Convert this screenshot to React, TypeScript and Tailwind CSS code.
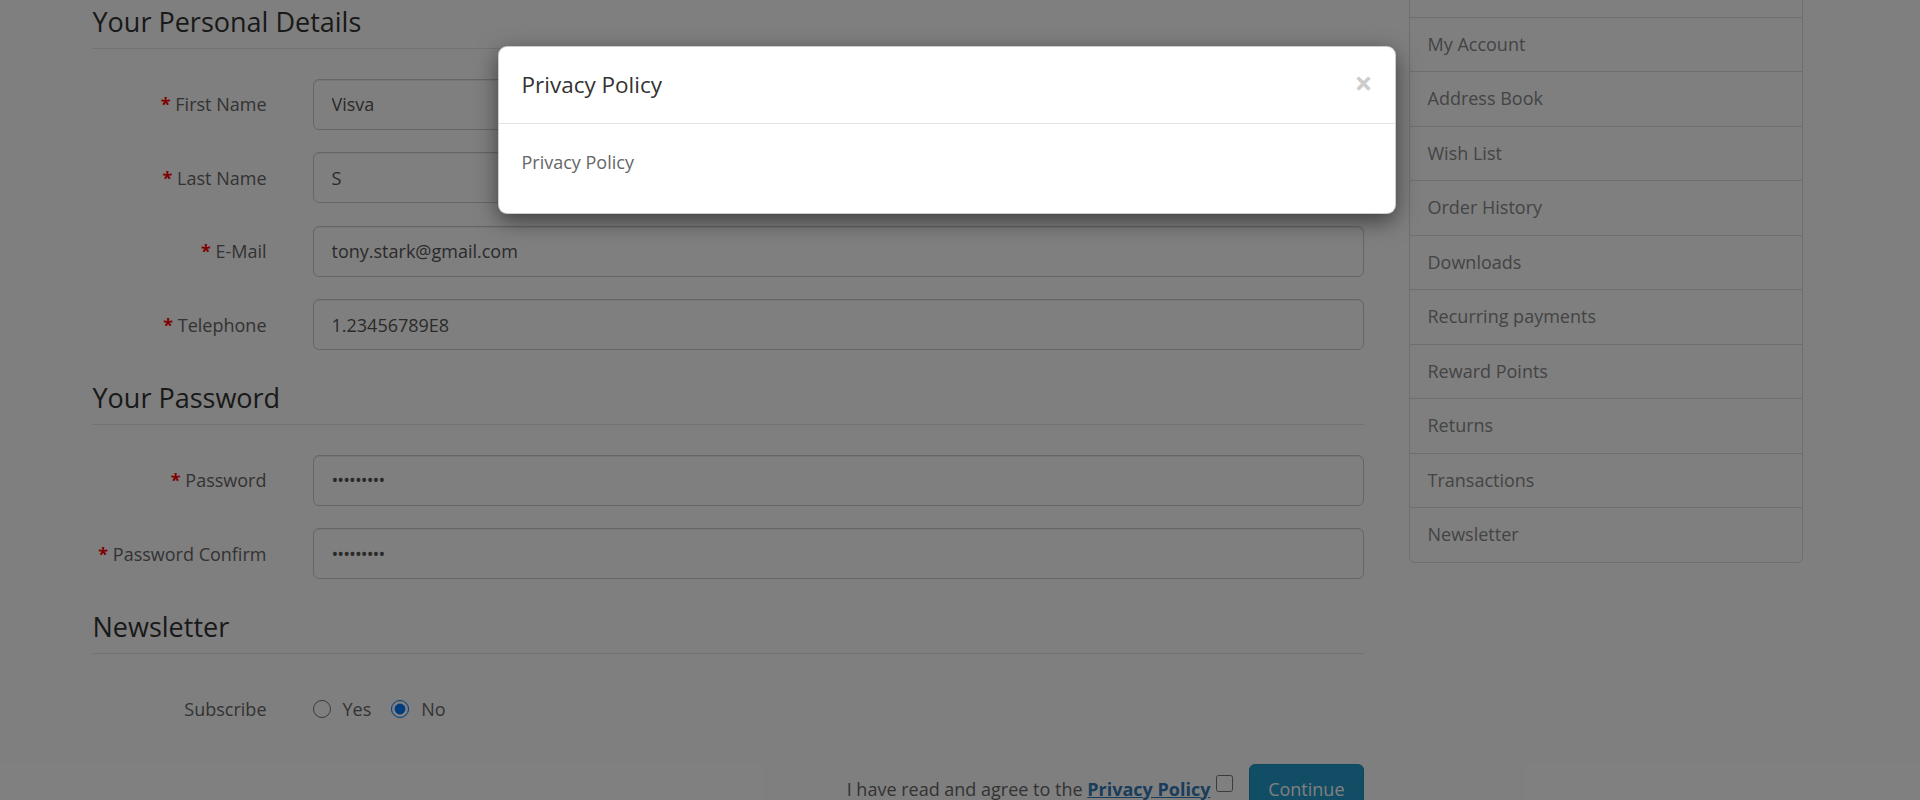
import React from "react"

const personal = [
  { label: "First Name", value: "Visva" },
  { label: "Last Name", value: "S" },
  { label: "E-Mail", value: "tony.stark@gmail.com" },
  { label: "Telephone", value: "1.23456789E8" },
]

const passwords = [
  { label: "Password", value: "123456789" },
  { label: "Password Confirm", value: "123456789" },
]

const accountLinks = [
  "Forgotten Password",
  "My Account",
  "Address Book",
  "Wish List",
  "Order History",
  "Downloads",
  "Recurring payments",
  "Reward Points",
  "Returns",
  "Transactions",
  "Newsletter",
]

function Legend({ children }: { children: React.ReactNode }) {
  return (
    <div className="pt-[6.5px] pb-[6px] mb-[30px] border-b border-[#e5e5e5] text-[27px] leading-[38.6px] text-[#333]">
      {children}
    </div>
  )
}

function Field({ label, value, type = "text" }: { label: string; value: string; type?: string }) {
  return (
    <div className="flex items-center mb-[22.5px]">
      <label className="w-[174px] shrink-0 text-right text-[18px] text-[#666] pt-[1px]">
        <span className="font-bold text-[#f00]">*</span> {label}
      </label>
      <input
        type={type}
        readOnly
        value={value}
        className={`ml-[46px] flex-1 h-[51px] px-[18px] rounded-[6px] border border-[#ccc] bg-white text-[18px] text-[#555] shadow-[inset_0_1px_1px_rgba(0,0,0,0.075)] outline-none ${
          type === "password" ? "tracking-[-0.9px]" : ""
        }`}
      />
    </div>
  )
}

export default function App() {
  return (
    <div className="relative h-[800px] overflow-hidden bg-white font-['Open_Sans',sans-serif]">
      <div className="flex pl-[70px]">
        <div className="w-[1316px] px-[22.5px] mt-[-3.3px]">
          <Legend>Your Personal Details</Legend>
          {personal.map((f) => (
            <Field key={f.label} label={f.label} value={f.value} />
          ))}

          <Legend>Your Password</Legend>
          {passwords.map((f) => (
            <Field key={f.label} label={f.label} value={f.value} type="password" />
          ))}

          <Legend>Newsletter</Legend>
          <div className="flex items-center h-[51px] mb-[22.5px]">
            <div className="w-[174px] shrink-0 text-right text-[18px] text-[#666]">Subscribe</div>
            <div className="ml-[46px] flex items-center text-[18px] text-[#666]">
              <input type="radio" name="newsletter" className="m-0 w-[18px] h-[18px]" />
              <span className="ml-[12px]">Yes</span>
              <input type="radio" name="newsletter" defaultChecked className="ml-[20px] m-0 w-[18px] h-[18px]" />
              <span className="ml-[12px]">No</span>
            </div>
          </div>

          <div className="flex justify-end items-baseline pt-[6.5px] text-[18px] text-[#666]">
            <span>
              I have read and agree to the{" "}
              <a className="font-bold underline text-[#337ab7]">Privacy Policy</a>
            </span>
            <input type="checkbox" className="ml-[6px] w-[17px] h-[17px] m-0 self-center translate-y-[-6px]" />
            <button className="ml-[15.7px] h-[51px] px-[18px] rounded-[6px] border border-[#1f90bb] bg-[#229ac8] text-white text-[18px] leading-[25.7px]">
              Continue
            </button>
          </div>
        </div>

        <div className="w-[439px] px-[22.5px] mt-[-39px]">
          <div className="border border-[#ddd] rounded-b-[6px]">
            {accountLinks.map((l, i) => (
              <div
                key={l}
                className={`h-[54.5px] pl-[18px] pt-[14.4px] text-[18px] leading-[25.7px] text-[#888] ${
                  i > 0 ? "border-t border-[#ddd]" : ""
                }`}
              >
                {l}
              </div>
            ))}
          </div>
        </div>
      </div>

      <div className="absolute inset-0 bg-black/50" />

      <div className="absolute left-[498px] top-[46px] w-[898px] rounded-[9px] border border-black/20 bg-white shadow-[0_7px_22px_rgba(0,0,0,0.5)]">
        <div className="flex items-center justify-between h-[77px] px-[22.5px] border-b border-[#e5e5e5]">
          <div className="text-[22.5px] leading-[32px] text-[#333]">Privacy Policy</div>
          <span className="text-[31.5px] leading-none font-bold text-[#ccc] mt-[-4px]">×</span>
        </div>
        <div className="h-[89px] px-[22.5px] pt-[26px] text-[18px] leading-[25.7px] text-[#666]">Privacy Policy</div>
      </div>
    </div>
  )
}
